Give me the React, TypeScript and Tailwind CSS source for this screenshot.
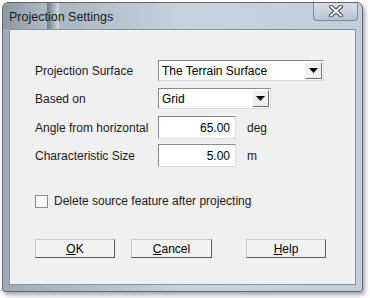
import React from "react";

const font = { fontFamily: '"Liberation Sans", Arial, sans-serif' };

const Arrow = () => (
    <div className="flex items-center justify-center w-[17px] h-[17px] bg-[#f0f0f0] border border-t-white border-l-white border-r-[#6d6d6d] border-b-[#6d6d6d]">
        <svg width="9" height="5" viewBox="0 0 9 5">
            <path d="M0 0h9L4.5 5z" fill="#000" />
        </svg>
    </div>
);

const Combo = ({ value, width }: { value: string; width: string }) => (
    <div
        className={`${width} h-[21px] flex items-center justify-between bg-white border border-t-[#8a8a8a] border-l-[#8a8a8a] border-r-[#dcdcdc] border-b-[#dcdcdc] pl-[3px] pr-[1px]`}
    >
        <span className="text-[12px] text-black">{value}</span>
        <Arrow />
    </div>
);

const NumField = ({ value, unit }: { value: string; unit: string }) => (
    <div className="flex items-center">
        <div className="w-[78px] h-[23px] flex items-center justify-end pr-[5px] bg-white border border-t-[#8a8a8a] border-l-[#8a8a8a] border-r-[#dcdcdc] border-b-[#dcdcdc] text-[12px] text-black">
            {value}
        </div>
        <span className="ml-[11px] text-[12px] text-[#1a1a1a]">{unit}</span>
    </div>
);

const Btn = ({ ul, rest, w }: { ul: string; rest: string; w: string }) => (
    <button
        className={`${w} h-[19px] flex items-center justify-center bg-[#f2f2f2] border border-t-[#c8c8c8] border-l-[#c8c8c8] border-r-[#5a5a5a] border-b-[#5a5a5a] text-[12px] text-black`}
    >
        <span>
            <span className="underline">{ul}</span>
            {rest}
        </span>
    </button>
);

export default function App() {
    const rows = [
        { label: "Projection Surface", el: <Combo value="The Terrain Surface" width="w-[166px]" /> },
        { label: "Based on", el: <Combo value="Grid" width="w-[113px]" /> },
    ];
    return (
        <div className="w-[370px] h-[298px] bg-white pt-[2px] pl-[2px]" style={font}>
            <div className="w-[361px] h-[290px] rounded-t-[6px] rounded-b-[3px] border border-[#5d6a76] bg-gradient-to-r from-[#9eabb6] via-[#c6d2dc] to-[#c2ced9] shadow-[2px_3px_4px_rgba(0,0,0,0.35)] flex flex-col overflow-hidden">
                <div className="h-[26px] flex items-start justify-between pl-[6px] pr-[4px] relative">
                    <div className="absolute left-0 top-0 w-[44px] h-[26px] bg-gradient-to-r from-[#7f8b95] to-[#b2bec8] opacity-60" />
                    <div className="absolute left-[44px] top-0 w-[12px] h-[26px] bg-gradient-to-r from-[#58636d] to-[#e6eef4] opacity-70" />
                    <span className="relative mt-[5px] text-[12.5px] text-[#1c1c1c]">Projection Settings</span>
                    <div className="w-[45px] h-[19px] -mt-[1px] rounded-b-[4px] border border-[#7d8894] border-t-0 bg-gradient-to-b from-[#d8e0e8] to-[#b8c4d0] flex items-center justify-center">
                        <svg width="16" height="12" viewBox="0 0 16 12">
                            <path d="M3 1.5l10 9M13 1.5l-10 9" stroke="#3a4450" strokeWidth="4" strokeLinecap="round" />
                            <path d="M3 1.5l10 9M13 1.5l-10 9" stroke="#fff" strokeWidth="2" strokeLinecap="round" />
                        </svg>
                    </div>
                </div>
                <div className="mx-[6px] mb-[6px] flex-1 bg-[#f0f0f0] border border-[#8795a2] flex flex-col pl-[25px] pt-[30px]">
                    <div className="flex flex-col gap-[7px]">
                        {rows.map((r) => (
                            <div key={r.label} className="flex items-center">
                                <span className="w-[123px] text-[12px] text-[#1a1a1a]">{r.label}</span>
                                {r.el}
                            </div>
                        ))}
                    </div>
                    <div className="flex flex-col gap-[5px] mt-[7px]">
                        <div className="flex items-center">
                            <span className="w-[123px] text-[12px] text-[#1a1a1a]">Angle from horizontal</span>
                            <NumField value="65.00" unit="deg" />
                        </div>
                        <div className="flex items-center">
                            <span className="w-[123px] text-[12px] text-[#1a1a1a]">Characteristic Size</span>
                            <NumField value="5.00" unit="m" />
                        </div>
                    </div>
                    <div className="flex items-center mt-[25px]">
                        <div className="w-[13px] h-[13px] bg-white border border-[#8a8a8a]" />
                        <span className="ml-[6px] text-[12px] text-[#1a1a1a]">Delete source feature after projecting</span>
                    </div>
                    <div className="flex mt-[29px]">
                        <Btn ul="O" rest="K" w="w-[80px]" />
                        <div className="w-[16px]" />
                        <Btn ul="C" rest="ancel" w="w-[81px]" />
                        <div className="w-[34px]" />
                        <Btn ul="H" rest="elp" w="w-[80px]" />
                    </div>
                </div>
            </div>
        </div>
    );
}
